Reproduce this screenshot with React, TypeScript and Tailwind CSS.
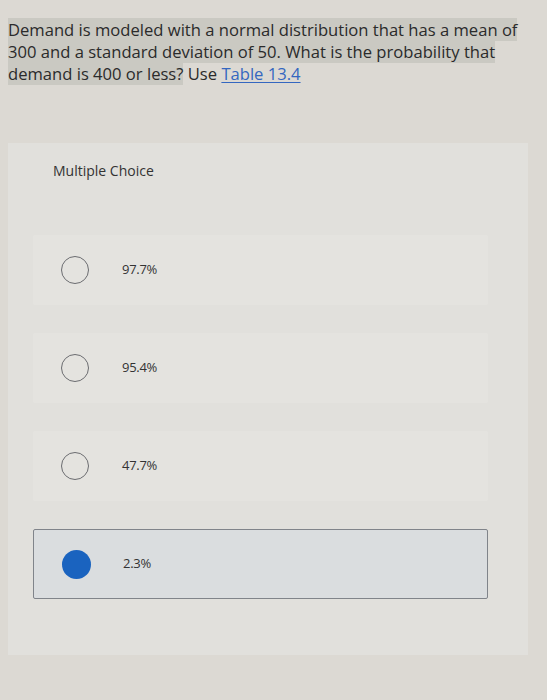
const options = [
  { label: "97.7%", selected: false },
  { label: "95.4%", selected: false },
  { label: "47.7%", selected: false },
  { label: "2.3%", selected: true },
];

function Radio({ on }: { on: boolean }) {
  return on ? (
    <span className="block h-[29px] w-[29px] rounded-full bg-[#1a63bf]" />
  ) : (
    <span className="block h-[28px] w-[28px] rounded-full border-[1.5px] border-[#6b6c70]" />
  );
}

export default function App() {
  return (
    <div
      className="min-h-[700px] bg-[#dcd9d3] pt-[19px] text-[#2b2b2b]"
      style={{ fontFamily: '"Open Sans", Arial, sans-serif' }}
    >
      <p className="w-[530px] pl-[8px] text-[16.6px] leading-[22px]">
        <span className="bg-[#cac9c2]">
          Demand is modeled with a normal distribution that has a mean of 300 and a standard deviation of
          50. What is the probability that demand is 400 or less?
        </span>{" "}
        Use{" "}
        <a className="text-[#3467c0] underline underline-offset-2" href="#">
          Table 13.4
        </a>
      </p>

      <section className="mx-[8px] mr-[19px] mt-[58px] bg-[#e1e0dc] pb-[56px] pt-[18px]">
        <h2 className="pl-[45px] text-[14px] leading-[20px] text-[#333]">Multiple Choice</h2>
        <ul className="mt-[54px] flex flex-col gap-[28px] pl-[25px] pr-[40px]">
          {options.map((o) => (
            <li
              key={o.label}
              className={`flex h-[70px] items-center rounded-[2px] ${
                o.selected ? "border border-[#80848a] bg-[#dadddf]" : "bg-[#e4e3df]"
              }`}
            >
              <span className="flex w-[84px] justify-center">
                <Radio on={o.selected} />
              </span>
              <span className="pl-[5px] text-[13px] tracking-[-0.3px] text-[#333]">{o.label}</span>
            </li>
          ))}
        </ul>
      </section>
    </div>
  );
}
